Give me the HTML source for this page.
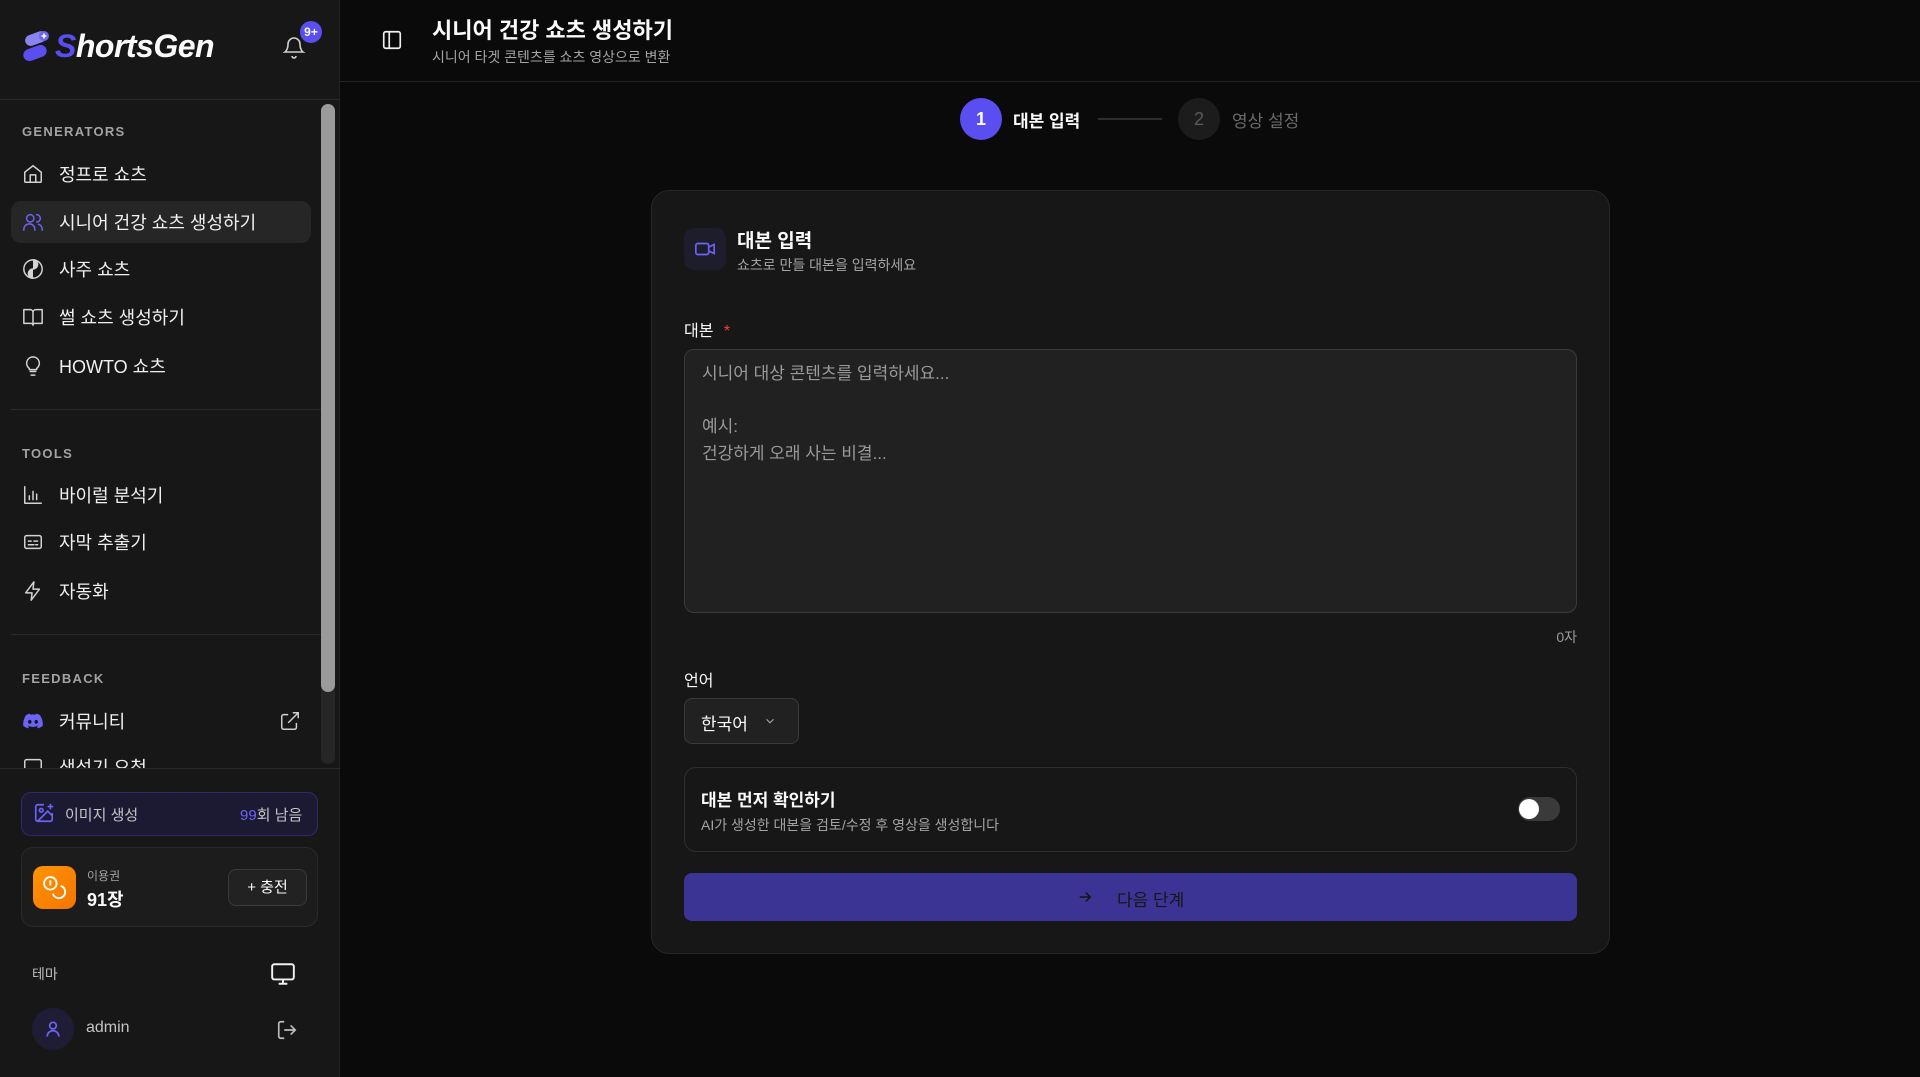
<!DOCTYPE html>
<html><head><meta charset="utf-8"><style>
*{margin:0;padding:0;box-sizing:border-box}
body{width:1920px;height:1077px;background:#0a0a0a;font-family:"Liberation Sans","Noto Sans CJK KR",sans-serif;color:#fafafa;position:relative;overflow:hidden}
.a{position:absolute}
.sb{left:0;top:0;width:340px;height:1077px;background:#171717;border-right:1px solid #222}
.sec{font-size:13px;letter-spacing:1.3px;color:#a3a3a3;font-weight:bold;left:22px}
.it{left:22px;font-size:18px;color:#f0f0f0;display:flex;align-items:center;height:24px}
.it svg{width:22px;height:22px;margin-right:15px;stroke:#d4d4d4;fill:none;stroke-width:1.6;stroke-linecap:round;stroke-linejoin:round}
.hr{height:1px;background:#2a2a2a}
</style></head><body>
<div class="a sb">
  <!-- logo -->
  <svg class="a" style="left:22px;top:30px" width="30" height="34" viewBox="0 0 30 34"><rect x="3" y="3" width="22" height="11" rx="5.5" fill="#8b84f0" transform="rotate(-20 14 9)"/><rect x="1" y="17" width="24" height="12" rx="6" fill="#5b4ef0" transform="rotate(-20 13 23)"/><circle cx="22" cy="6" r="5" fill="#6d63f5"/><path d="M22 3.5v5M19.5 6h5" stroke="#fff" stroke-width="1.6"/></svg>
  <div class="a" style="left:55px;top:28px;font-size:32px;font-weight:bold;font-style:italic;letter-spacing:-0.5px"><span style="color:#5b4ef0">S</span>hortsGen</div>
  <svg class="a" style="left:282px;top:34px" width="24" height="26" viewBox="0 0 24 26" fill="none" stroke="#cfcfcf" stroke-width="1.6"><path d="M6 10a6 6 0 0 1 12 0c0 6 3 8 3 8H3s3-2 3-8M10 22a2 2 0 0 0 4 0"/></svg>
  <div class="a" style="left:300px;top:21px;width:22px;height:22px;border-radius:11px;background:#5b4ef0;font-size:12px;font-weight:bold;text-align:center;line-height:22px">9+</div>
  <div class="a hr" style="left:0;top:99px;width:340px"></div>

  <div class="a sec" style="top:124px">GENERATORS</div>
  <div class="a it" style="top:162px"><svg viewBox="0 0 24 24"><path d="M3 10l9-7 9 7v10a1 1 0 0 1-1 1H4a1 1 0 0 1-1-1z"/><path d="M9 21v-8h6v8"/></svg>정프로 쇼츠</div>
  <div class="a" style="left:11px;top:201px;width:300px;height:42px;border-radius:10px;background:#262626"></div>
  <div class="a it" style="top:210px"><svg viewBox="0 0 24 24" style="stroke:#6d63f5"><circle cx="9" cy="8" r="4"/><path d="M2 21v-1a6 6 0 0 1 12 0v1M16 4a4 4 0 0 1 0 8M22 21v-1a6 6 0 0 0-4-5.6"/></svg>시니어 건강 쇼츠 생성하기</div>
  <div class="a it" style="top:257px"><svg viewBox="0 0 24 24"><circle cx="12" cy="12" r="10"/><path d="M12 2a5 5 0 0 1 0 10a5 5 0 0 0 0 10" fill="#d4d4d4"/></svg>사주 쇼츠</div>
  <div class="a it" style="top:305px"><svg viewBox="0 0 24 24"><path d="M2 4h7a3 3 0 0 1 3 3v14a2 2 0 0 0-2-2H2zM22 4h-7a3 3 0 0 0-3 3v14a2 2 0 0 1 2-2h8z"/></svg>썰 쇼츠 생성하기</div>
  <div class="a it" style="top:354px"><svg viewBox="0 0 24 24"><path d="M9 18h6M10 22h4M12 2a7 7 0 0 0-4 12.7V16h8v-1.3A7 7 0 0 0 12 2z"/></svg>HOWTO 쇼츠</div>
  <div class="a hr" style="left:11px;top:409px;width:310px"></div>

  <div class="a sec" style="top:446px">TOOLS</div>
  <div class="a it" style="top:483px"><svg viewBox="0 0 24 24"><path d="M3 3v18h18M8 17v-4M12 17V8M16 17v-6"/></svg>바이럴 분석기</div>
  <div class="a it" style="top:530px"><svg viewBox="0 0 24 24"><rect x="3" y="5" width="18" height="14" rx="2"/><path d="M7 11h3M13 11h4M7 15h6M15 15h2"/></svg>자막 추출기</div>
  <div class="a it" style="top:579px"><svg viewBox="0 0 24 24"><path d="M13 2L4 14h7l-1 8 9-12h-7z"/></svg>자동화</div>
  <div class="a hr" style="left:11px;top:634px;width:310px"></div>

  <div class="a sec" style="top:671px">FEEDBACK</div>
  <div class="a it" style="top:709px"><svg viewBox="0 0 24 24" style="fill:#6d63f5;stroke:none"><path d="M19.5 5.5A17 17 0 0 0 15.3 4l-.5 1a16 16 0 0 0-5.6 0l-.5-1a17 17 0 0 0-4.2 1.5C1.8 9.6 1 13.6 1.4 17.5A17 17 0 0 0 6.6 20l1.1-1.8a11 11 0 0 1-1.7-.8l.4-.3a12 12 0 0 0 11.2 0l.4.3-1.7.8 1.1 1.8a17 17 0 0 0 5.2-2.5c.5-4.5-.8-8.5-3.1-12zM8.5 15c-1 0-1.9-1-1.9-2.1s.8-2.1 1.9-2.1 1.9 1 1.9 2.1-.8 2.1-1.9 2.1zm7 0c-1 0-1.9-1-1.9-2.1s.8-2.1 1.9-2.1 1.9 1 1.9 2.1-.8 2.1-1.9 2.1z"/></svg>커뮤니티</div>
  <svg class="a" style="left:279px;top:710px" width="22" height="22" viewBox="0 0 24 24" fill="none" stroke="#cfcfcf" stroke-width="1.6"><path d="M15 3h6v6M10 14L21 3M19 14v5a2 2 0 0 1-2 2H5a2 2 0 0 1-2-2V7a2 2 0 0 1 2-2h5"/></svg>
  <div class="a" style="left:0;top:750px;width:320px;height:18px;overflow:hidden"><div class="a it" style="top:5px"><svg viewBox="0 0 24 24"><rect x="3" y="4" width="18" height="16" rx="2"/></svg>생성기 요청</div></div>
  <div class="a" style="left:321px;top:104px;width:14px;height:660px;border-radius:7px;background:#262626"></div>
  <div class="a" style="left:321px;top:104px;width:14px;height:588px;border-radius:7px;background:#9a9a9a"></div>
  <div class="a hr" style="left:0;top:768px;width:340px"></div>

  <div class="a" style="left:21px;top:792px;width:297px;height:44px;border-radius:10px;background:#1c1a33;border:1px solid #2e2a6b"></div>
  <svg class="a" style="left:33px;top:802px" width="22" height="22" viewBox="0 0 24 24" fill="none" stroke="#6d63f5" stroke-width="1.8"><path d="M21 12v7a2 2 0 0 1-2 2H5a2 2 0 0 1-2-2V5a2 2 0 0 1 2-2h7M16 5h6M19 2v6"/><circle cx="9" cy="9" r="2"/><path d="M21 15l-5-5L5 21"/></svg>
  <div class="a" style="left:65px;top:804px;font-size:15px;color:#c4c4c4">이미지 생성</div>
  <div class="a" style="left:240px;top:804px;font-size:15px;color:#c4c4c4"><span style="color:#6d63f5">99</span>회 남음</div>

  <div class="a" style="left:21px;top:847px;width:297px;height:80px;border-radius:12px;background:#1c1c1c;border:1px solid #2a2a2a"></div>
  <div class="a" style="left:33px;top:866px;width:43px;height:43px;border-radius:10px;background:linear-gradient(135deg,#ff9500,#f57400)"></div>
  <svg class="a" style="left:42px;top:875px" width="25" height="25" viewBox="0 0 24 24" fill="none" stroke="#fff" stroke-width="1.8"><circle cx="8" cy="8" r="6"/><path d="M18 10.5a6 6 0 1 1-7.5 7.5M7 6h1v4"/></svg>
  <div class="a" style="left:87px;top:867px;font-size:12px;color:#a3a3a3">이용권</div>
  <div class="a" style="left:87px;top:886px;font-size:18px;font-weight:bold">91장</div>
  <div class="a" style="left:228px;top:869px;width:79px;height:37px;border-radius:8px;background:#222;border:1px solid #3a3a3a;font-size:15px;text-align:center;line-height:35px">+ 충전</div>

  <div class="a" style="left:32px;top:964px;font-size:14px;color:#bdbdbd">테마</div>
  <svg class="a" style="left:270px;top:961px" width="26" height="26" viewBox="0 0 24 24" fill="none" stroke="#f0f0f0" stroke-width="1.8"><rect x="2" y="3" width="20" height="14" rx="2"/><path d="M8 21h8M12 17v4"/></svg>
  <div class="a" style="left:32px;top:1008px;width:42px;height:42px;border-radius:21px;background:#1f1d36"></div>
  <svg class="a" style="left:43px;top:1019px" width="20" height="20" viewBox="0 0 24 24" fill="none" stroke="#6d63f5" stroke-width="2"><circle cx="12" cy="8" r="4"/><path d="M5 21a7 7 0 0 1 14 0"/></svg>
  <div class="a" style="left:86px;top:1019px;font-size:16px;color:#c4c4c4">admin</div>
  <svg class="a" style="left:276px;top:1019px" width="22" height="22" viewBox="0 0 24 24" fill="none" stroke="#bdbdbd" stroke-width="1.8"><path d="M9 21H5a2 2 0 0 1-2-2V5a2 2 0 0 1 2-2h4M16 17l5-5-5-5M21 12H9"/></svg>
</div>

<!-- header -->
<svg class="a" style="left:381px;top:29px" width="22" height="22" viewBox="0 0 24 24" fill="none" stroke="#f0f0f0" stroke-width="1.8"><rect x="3" y="3" width="18" height="18" rx="2"/><path d="M9 3v18"/></svg>
<div class="a" style="left:432px;top:13px;font-size:22px;font-weight:bold">시니어 건강 쇼츠 생성하기</div>
<div class="a" style="left:432px;top:47px;font-size:14px;color:#a3a3a3">시니어 타겟 콘텐츠를 쇼츠 영상으로 변환</div>
<div class="a hr" style="left:340px;top:81px;width:1580px;background:#222"></div>

<!-- steps -->
<div class="a" style="left:960px;top:98px;width:42px;height:42px;border-radius:21px;background:#5b4ef0;text-align:center;line-height:42px;font-size:18px;font-weight:bold">1</div>
<div class="a" style="left:1013px;top:107px;font-size:17px;font-weight:bold">대본 입력</div>
<div class="a" style="left:1098px;top:118px;width:64px;height:2px;background:#2e2e2e"></div>
<div class="a" style="left:1178px;top:98px;width:42px;height:42px;border-radius:21px;background:#1c1c1c;text-align:center;line-height:42px;font-size:18px;color:#5a5a5a">2</div>
<div class="a" style="left:1232px;top:107px;font-size:17px;color:#6a6a6a">영상 설정</div>

<!-- card -->
<div class="a" style="left:651px;top:190px;width:959px;height:764px;border-radius:18px;background:#171717;border:1px solid #262626"></div>
<div class="a" style="left:684px;top:228px;width:42px;height:42px;border-radius:10px;background:#1e1d2c"></div>
<svg class="a" style="left:694px;top:238px" width="22" height="22" viewBox="0 0 24 24" fill="none" stroke="#6d63f5" stroke-width="1.8"><rect x="2" y="6" width="14" height="12" rx="2"/><path d="M16 10l6-3v10l-6-3"/></svg>
<div class="a" style="left:737px;top:226px;font-size:19px;font-weight:bold">대본 입력</div>
<div class="a" style="left:737px;top:255px;font-size:14px;color:#a3a3a3">쇼츠로 만들 대본을 입력하세요</div>

<div class="a" style="left:684px;top:317px;font-size:16px">대본 <span style="color:#ef4444;margin-left:6px">*</span></div>
<div class="a" style="left:684px;top:349px;width:893px;height:264px;border-radius:10px;background:#212121;border:1px solid #3a3a3a"></div>
<div class="a" style="left:702px;top:361px;font-size:17px;color:#9a9a9a;line-height:26.5px">시니어 대상 콘텐츠를 입력하세요...<br><br>예시:<br>건강하게 오래 사는 비결...</div>
<div class="a" style="left:1540px;top:627px;font-size:14px;color:#9a9a9a;width:37px;text-align:right">0자</div>

<div class="a" style="left:684px;top:667px;font-size:16px">언어</div>
<div class="a" style="left:684px;top:698px;width:115px;height:46px;border-radius:8px;background:#212121;border:1px solid #3a3a3a"></div>
<div class="a" style="left:701px;top:710px;font-size:17px">한국어</div>
<svg class="a" style="left:763px;top:714px" width="14" height="14" viewBox="0 0 24 24" fill="none" stroke="#a3a3a3" stroke-width="2"><path d="M6 9l6 6 6-6"/></svg>

<div class="a" style="left:684px;top:767px;width:893px;height:85px;border-radius:12px;border:1px solid #2e2e2e"></div>
<div class="a" style="left:701px;top:786px;font-size:17px;font-weight:bold">대본 먼저 확인하기</div>
<div class="a" style="left:701px;top:815px;font-size:14px;color:#a3a3a3">AI가 생성한 대본을 검토/수정 후 영상을 생성합니다</div>
<div class="a" style="left:1518px;top:797px;width:42px;height:24px;border-radius:12px;background:#3a3a3a"></div>
<div class="a" style="left:1519px;top:799px;width:20px;height:20px;border-radius:10px;background:#fff"></div>

<div class="a" style="left:684px;top:873px;width:893px;height:48px;border-radius:8px;background:#3b3494"></div>
<svg class="a" style="left:1076px;top:888px" width="18" height="18" viewBox="0 0 24 24" fill="none" stroke="#141414" stroke-width="2"><path d="M5 12h14M13 6l6 6-6 6"/></svg>
<div class="a" style="left:1117px;top:886px;font-size:17px;color:#161616">다음 단계</div>
</body></html>
